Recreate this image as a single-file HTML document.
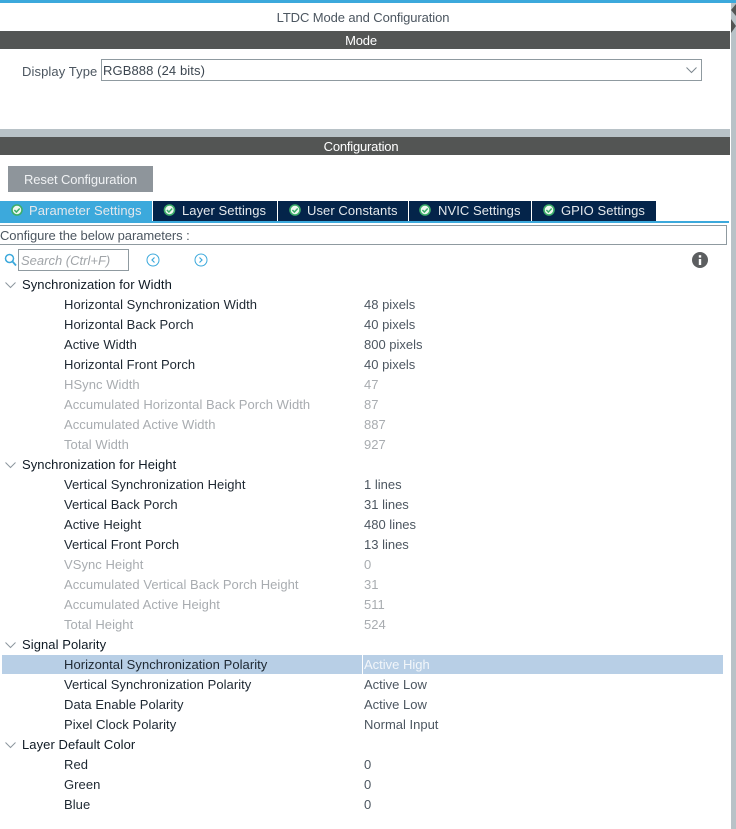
<!DOCTYPE html>
<html>
<head>
<meta charset="utf-8">
<style>
html,body{margin:0;padding:0;background:#fff;}
#p{position:relative;width:736px;height:829px;overflow:hidden;background:#fff;font-family:"Liberation Sans",Arial,sans-serif;font-size:13px;color:#3c4650;}
#p div,#p svg{position:absolute;}
.t{white-space:nowrap;line-height:22px;height:20px;letter-spacing:.07px;}
.g{left:22px;color:#0f1a24;}
.l{left:64px;color:#1e2832;letter-spacing:.05px;}
.v{left:364px;color:#4c5660;letter-spacing:0;}
.d{color:#a8acb0;}
.bar{left:0;width:722px;height:18px;padding-right:8px;background:#535554;color:#fff;text-align:center;line-height:20px;letter-spacing:-.2px;}
.tab{top:201px;height:20px;background:#04244a;color:#e4e8ec;line-height:20px;letter-spacing:.07px;white-space:nowrap;}
.tab span{position:absolute;top:0;}
</style>
</head>
<body>
<div id="p">
<div style="left:0;top:0;width:736px;height:3px;background:#3ca9dc"></div>
<div style="left:731px;top:3px;width:5px;height:826px;background:#b8c2c7"></div>
<svg style="left:730px;top:3px" width="6" height="32"><path d="M6 1 L1 7 L6 13Z M1 16 L6 23 L1 30Z" fill="#535554"/></svg>

<div class="t" style="left:0;width:726px;top:7px;text-align:center;color:#4c5660;letter-spacing:-.1px">LTDC Mode and Configuration</div>
<div class="bar" style="top:31px">Mode</div>
<div class="t" style="left:22px;top:61px;color:#4c5660;letter-spacing:.1px">Display Type</div>
<div style="left:101px;top:59px;width:599px;height:20px;border:1px solid #8f9aa0"></div>
<div class="t" style="left:103px;top:60px;color:#3c4650;letter-spacing:.1px">RGB888 (24 bits)</div>
<svg style="left:685px;top:66px" width="13" height="9"><path d="M1.5 1.5 L6.5 6.5 L11.5 1.5" fill="none" stroke="#7c868e" stroke-width="1"/></svg>

<div style="left:0;top:129px;width:730px;height:8px;background:#b8c2c7"></div>
<div class="bar" style="top:137px">Configuration</div>

<div style="left:8px;top:166px;width:145px;height:26px;background:#8e959b;color:#f0f2f4;line-height:27px;text-align:center;letter-spacing:-.1px">Reset Configuration</div>

<div class="tab" style="left:0;width:152px;background:#3ca9dc"><span style="left:29px">Parameter Settings</span></div>
<div class="tab" style="left:153px;width:124px"><span style="left:29px">Layer Settings</span></div>
<div class="tab" style="left:278px;width:130px"><span style="left:29px">User Constants</span></div>
<div class="tab" style="left:409px;width:122px"><span style="left:29px">NVIC Settings</span></div>
<div class="tab" style="left:532px;width:124px"><span style="left:29px">GPIO Settings</span></div>
<svg style="left:0;top:201px" width="560" height="20">
<g fill="#eef8f0" stroke="#3dae6a" stroke-width="1.6">
<circle cx="17" cy="9" r="5"/>
<circle cx="169.5" cy="9" r="5"/>
<circle cx="295" cy="9" r="5"/>
<circle cx="425" cy="9" r="5"/>
<circle cx="549" cy="9" r="5"/>
</g>
<g fill="none" stroke="#3dae6a" stroke-width="1.5">
<path d="M14.4 9 L16.4 11 L19.7 7.5"/>
<path d="M166.9 9 L168.9 11 L172.2 7.5"/>
<path d="M292.4 9 L294.4 11 L297.7 7.5"/>
<path d="M422.4 9 L424.4 11 L427.7 7.5"/>
<path d="M546.4 9 L548.4 11 L551.7 7.5"/>
</g>
</svg>
<div style="left:0;top:221px;width:729px;height:2px;background:#3ca9dc"></div>

<div style="left:-1px;top:225px;width:726px;height:18px;border:1px solid #8f9aa0"></div>
<div class="t" style="left:0;top:225px;color:#4c5660;letter-spacing:-.08px">Configure the below parameters :</div>

<svg style="left:4px;top:253px" width="13" height="14"><circle cx="5.5" cy="5.5" r="4" fill="none" stroke="#3ca9dc" stroke-width="1.5"/><path d="M8.5 8.5 L12 12.5" stroke="#3ca9dc" stroke-width="1.8"/></svg>
<div style="left:18px;top:249px;width:109px;height:20px;border:1px solid #8f9aa0"></div>
<div class="t" style="left:21px;top:250px;color:#a0a4a8;font-style:italic;letter-spacing:0">Search (Ctrl+F)</div>
<svg style="left:146px;top:253px" width="62" height="14">
<circle cx="7" cy="7" r="6" fill="none" stroke="#3ca9dc" stroke-width="1"/><path d="M8.5 4.5 L6 7 L8.5 9.5" fill="none" stroke="#3ca9dc" stroke-width="1.2"/>
<circle cx="55" cy="7" r="6" fill="none" stroke="#3ca9dc" stroke-width="1"/><path d="M53.5 4.5 L56 7 L53.5 9.5" fill="none" stroke="#3ca9dc" stroke-width="1.2"/>
</svg>
<svg style="left:692px;top:252px" width="16" height="16"><circle cx="8" cy="8" r="8" fill="#5c5e60"/><rect x="6.8" y="7" width="2.4" height="6" fill="#fff"/><rect x="6.8" y="3.2" width="2.4" height="2.4" fill="#fff"/></svg>

<svg style="left:4px;top:281px" width="14" height="480">
<path d="M1.5 1.5 L6.5 6.5 L11.5 1.5" fill="none" stroke="#8c969e" stroke-width="1"/>
<path d="M1.5 181.5 L6.5 186.5 L11.5 181.5" fill="none" stroke="#8c969e" stroke-width="1"/>
<path d="M1.5 361.5 L6.5 366.5 L11.5 361.5" fill="none" stroke="#8c969e" stroke-width="1"/>
<path d="M1.5 461.5 L6.5 466.5 L11.5 461.5" fill="none" stroke="#8c969e" stroke-width="1"/>
</svg>

<div style="left:2px;top:655px;width:721px;height:19px;background:#b8cfe6"></div>
<div style="left:362px;top:655px;width:1px;height:19px;background:#fff"></div>

<div class="t g" style="top:274px">Synchronization for Width</div>
<div class="t l" style="top:294px">Horizontal Synchronization Width</div><div class="t v" style="top:294px">48 pixels</div>
<div class="t l" style="top:314px">Horizontal Back Porch</div><div class="t v" style="top:314px">40 pixels</div>
<div class="t l" style="top:334px">Active Width</div><div class="t v" style="top:334px">800 pixels</div>
<div class="t l" style="top:354px">Horizontal Front Porch</div><div class="t v" style="top:354px">40 pixels</div>
<div class="t l d" style="top:374px">HSync Width</div><div class="t v d" style="top:374px">47</div>
<div class="t l d" style="top:394px">Accumulated Horizontal Back Porch Width</div><div class="t v d" style="top:394px">87</div>
<div class="t l d" style="top:414px">Accumulated Active Width</div><div class="t v d" style="top:414px">887</div>
<div class="t l d" style="top:434px">Total Width</div><div class="t v d" style="top:434px">927</div>

<div class="t g" style="top:454px">Synchronization for Height</div>
<div class="t l" style="top:474px">Vertical Synchronization Height</div><div class="t v" style="top:474px">1 lines</div>
<div class="t l" style="top:494px">Vertical Back Porch</div><div class="t v" style="top:494px">31 lines</div>
<div class="t l" style="top:514px">Active Height</div><div class="t v" style="top:514px">480 lines</div>
<div class="t l" style="top:534px">Vertical Front Porch</div><div class="t v" style="top:534px">13 lines</div>
<div class="t l d" style="top:554px">VSync Height</div><div class="t v d" style="top:554px">0</div>
<div class="t l d" style="top:574px">Accumulated Vertical Back Porch Height</div><div class="t v d" style="top:574px">31</div>
<div class="t l d" style="top:594px">Accumulated Active Height</div><div class="t v d" style="top:594px">511</div>
<div class="t l d" style="top:614px">Total Height</div><div class="t v d" style="top:614px">524</div>

<div class="t g" style="top:634px">Signal Polarity</div>
<div class="t l" style="top:654px">Horizontal Synchronization Polarity</div><div class="t v" style="top:654px;color:#f2f6fa">Active High</div>
<div class="t l" style="top:674px">Vertical Synchronization Polarity</div><div class="t v" style="top:674px">Active Low</div>
<div class="t l" style="top:694px">Data Enable Polarity</div><div class="t v" style="top:694px">Active Low</div>
<div class="t l" style="top:714px">Pixel Clock Polarity</div><div class="t v" style="top:714px">Normal Input</div>

<div class="t g" style="top:734px">Layer Default Color</div>
<div class="t l" style="top:754px">Red</div><div class="t v" style="top:754px">0</div>
<div class="t l" style="top:774px">Green</div><div class="t v" style="top:774px">0</div>
<div class="t l" style="top:794px">Blue</div><div class="t v" style="top:794px">0</div>
</div>
</body>
</html>
